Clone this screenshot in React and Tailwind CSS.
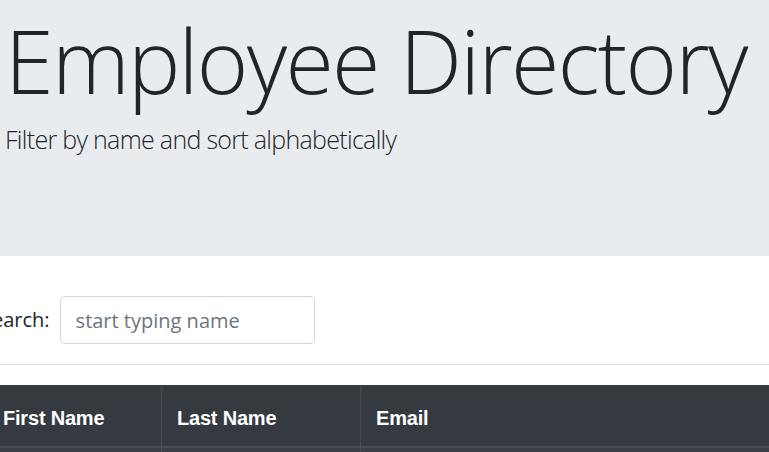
import React, { useState } from 'react';

const COLS = [
  ['First Name', 'w-[200px]'],
  ['Last Name', 'w-[199px]'],
  ['Email', ''],
];

export default function App() {
  const [query, setQuery] = useState('');

  return (
    <div className="w-[769px] h-[452px] overflow-hidden bg-white text-[#212529]" style={{ fontFamily: '"Open Sans", "Noto Sans", sans-serif' }}>
      {/* Jumbotron */}
      <div className="h-[256px] bg-[#e9ecef] pl-[5px] pt-[8px]">
        <h1 className="text-[88px] font-light leading-[1.2] tracking-[-1.7px] text-[#212529]">Employee Directory</h1>
        <p className="text-[25px] font-light leading-[1.5] tracking-[-0.7px] mt-[7px] text-[#212529]">Filter by name and sort alphabetically</p>
      </div>

      {/* Search */}
      <div className="flex items-end gap-[10px] h-[109px] pb-[20px] border-b border-[#dee2e6] ml-[-19px]">
        <label className="text-[20px] leading-[48px]">Search:</label>
        <input value={query} onChange={e => setQuery(e.target.value)}
          placeholder="start typing name"
          className="w-[255px] h-[48px] px-[15px] text-[20px] border border-[#ced4da] rounded-[5px] outline-none placeholder-[#6c757d] bg-white" />
      </div>

      {/* Table */}
      <table className="mt-[20px] w-[850px] ml-[-39px] border-collapse" style={{ fontFamily: '"Liberation Sans", Arial, sans-serif' }}>
        <thead>
          <tr className="bg-[#343a40] text-white">
            {COLS.map(([l, w], i) => (
              <th key={l} className={`${w} text-left text-[20px] font-bold px-[15px] pt-[5px] h-[62px] border-x border-[#454d55] tracking-[-0.2px] ${i === 0 ? 'pl-[41px]' : ''}`}>{l}</th>
            ))}
          </tr>
        </thead>
        <tbody>
          <tr className="bg-[#3b4047] h-[40px] border-t-2 border-[#454d55]">
            <td className="border-x border-[#454d55]"></td>
            <td className="border-x border-[#454d55]"></td>
            <td className="border-x border-[#454d55]"></td>
          </tr>
        </tbody>
      </table>
    </div>
  );
}
